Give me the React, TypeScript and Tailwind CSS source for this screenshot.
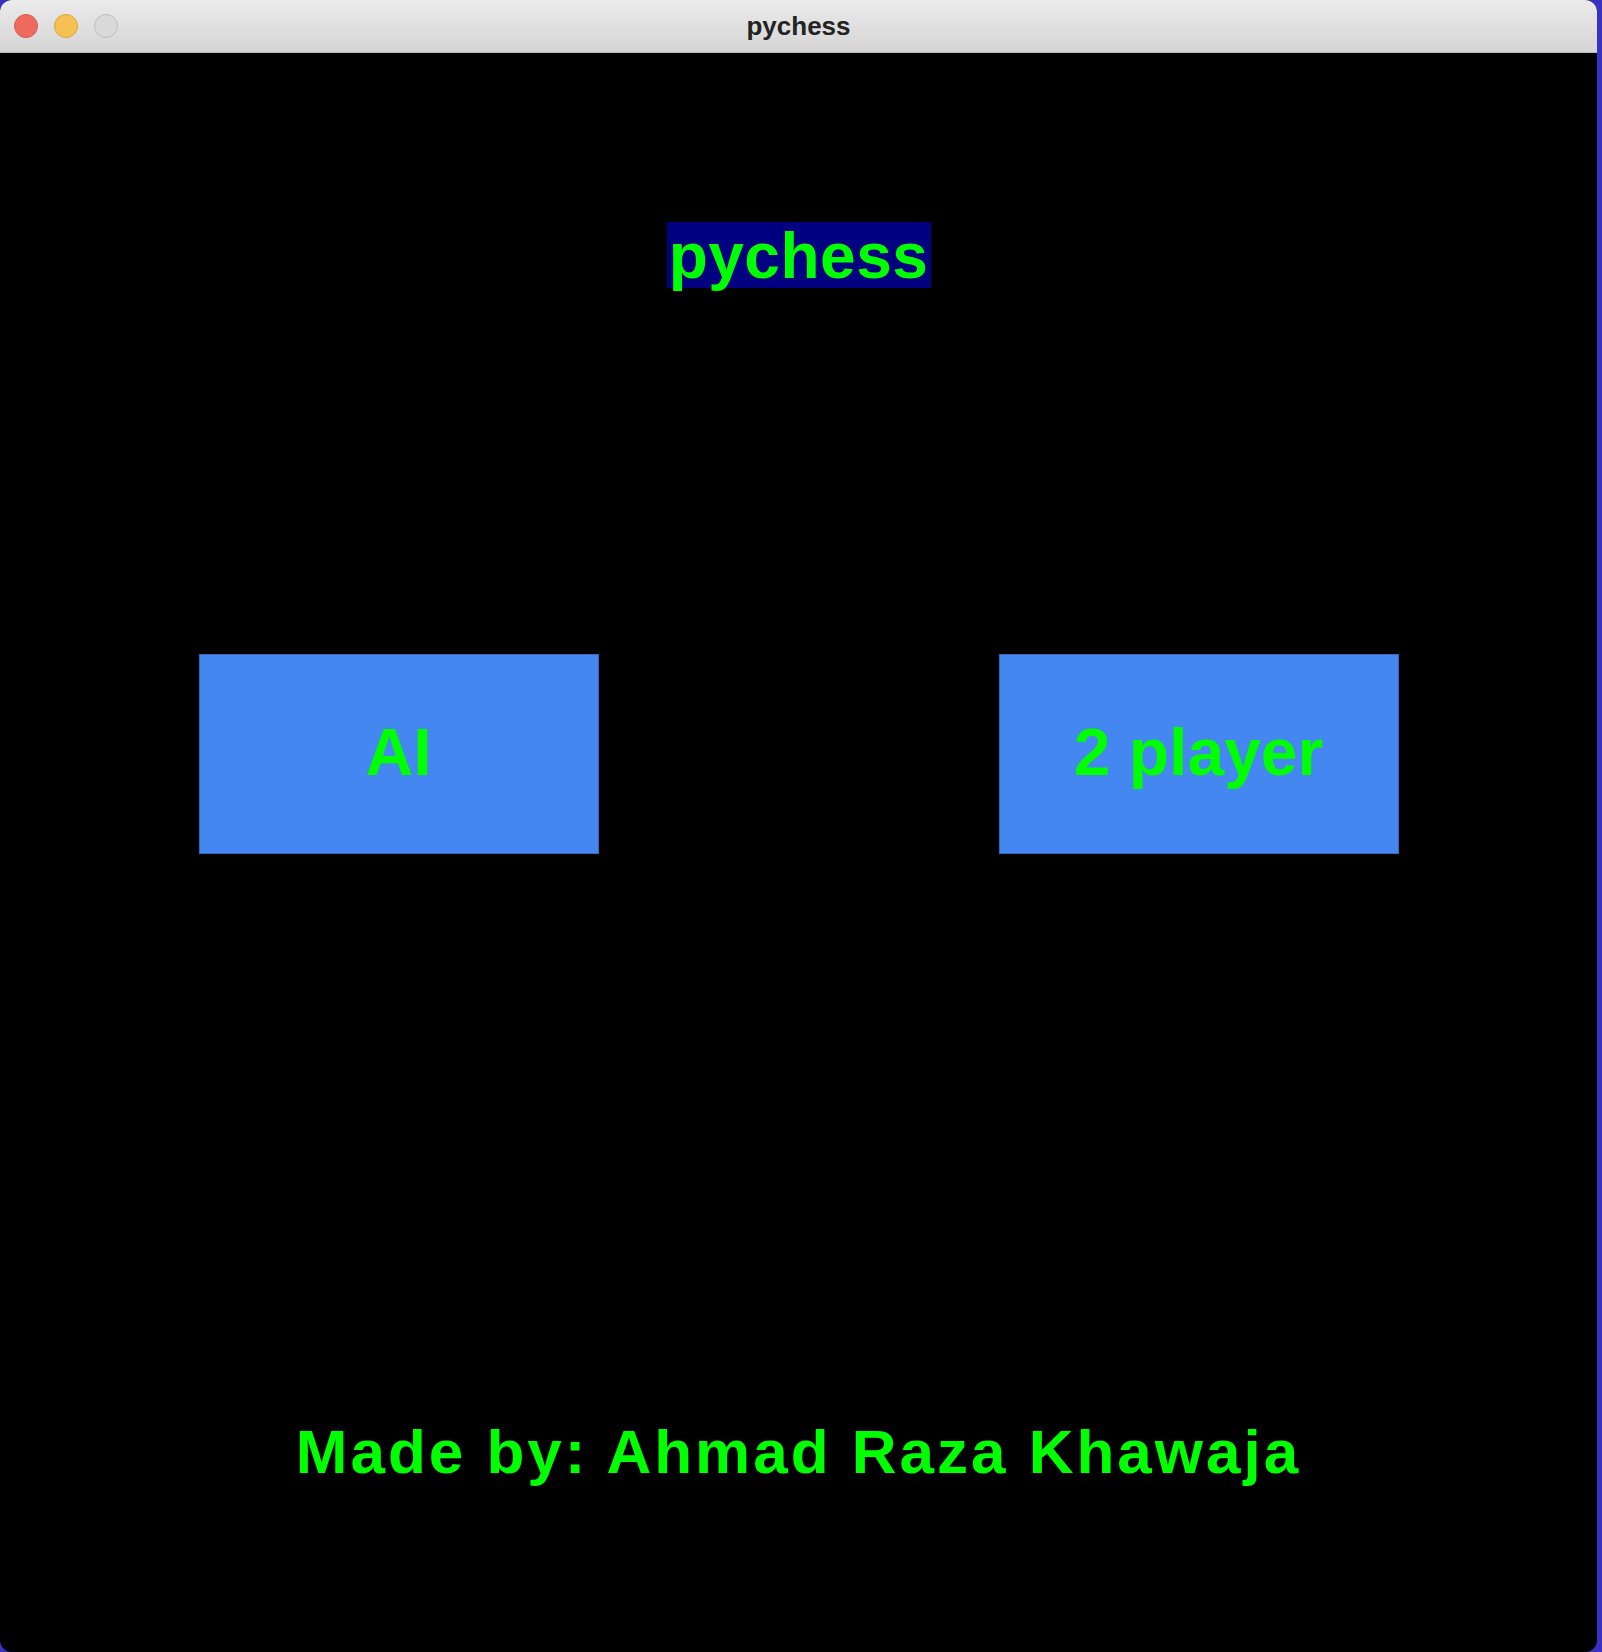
export default function App() {
  return (
    <div className="flex h-[1652px] w-[1602px] bg-[#3a30c2]">
      <div className="flex h-full w-[1597px] flex-col overflow-hidden rounded-[12px] bg-black">
        {/* title bar */}
        <div className="relative flex h-[53px] shrink-0 items-center justify-center border-b border-[#b9b9b9] bg-gradient-to-b from-[#ebebeb] to-[#d5d5d5]">
          <div className="absolute left-[14px] top-[14px] flex gap-[16px]">
            <span className="h-[24px] w-[24px] rounded-full border border-[#d85a50] bg-[#ee6a5e]" />
            <span className="h-[24px] w-[24px] rounded-full border border-[#d9a43c] bg-[#f6c152]" />
            <span className="h-[24px] w-[24px] rounded-full border border-[#bdbdbd] bg-[#d9d9d9]" />
          </div>
          <span className="font-['Liberation_Sans',Arial,sans-serif] text-[26px] font-bold text-[#232323]">
            pychess
          </span>
        </div>

        {/* menu */}
        <div className="flex flex-1 flex-col items-center">
          <div className="mt-[169px] flex h-[66px] w-[264px] items-center justify-center bg-[#000080] font-['Liberation_Sans',Arial,sans-serif] text-[64px] leading-none font-bold text-[#00ff00]">
            <span className="pt-[2px] tracking-[0.5px]">pychess</span>
          </div>

          <div className="mt-[366px] flex w-full justify-center gap-[400px]">
            <div className="flex h-[200px] w-[400px] items-center justify-center border border-[#3567b8] bg-[#4487f1] font-['Liberation_Sans',Arial,sans-serif] text-[66px] font-bold text-[#00ff00]">
              <span className="-mt-[4px]">AI</span>
            </div>
            <div className="flex h-[200px] w-[400px] items-center justify-center border border-[#3567b8] bg-[#4487f1] font-['Liberation_Sans',Arial,sans-serif] text-[66px] font-bold text-[#00ff00]">
              <span className="-mt-[4px]">2 player</span>
            </div>
          </div>

          <div className="mt-[567px] font-['Liberation_Sans',Arial,sans-serif] text-[62px] leading-none font-bold tracking-[3px] text-[#00ff00]">
            Made by: Ahmad Raza Khawaja
          </div>
        </div>
      </div>
    </div>
  );
}
